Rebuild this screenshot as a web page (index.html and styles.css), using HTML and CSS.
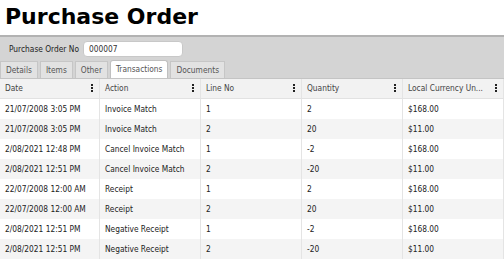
FILE: index.html
```html
<!DOCTYPE html>
<html>
<head>
<meta charset="utf-8">
<link rel="stylesheet" href="styles.css">
</head>
<body>
<h1 class="title">Purchase Order</h1>
<div class="band">
  <div class="field">
    <span class="label">Purchase Order No</span>
    <span class="input">000007</span>
  </div>
  <div class="tabs">
    <span class="tab">Details</span>
    <span class="tab">Items</span>
    <span class="tab">Other</span>
    <span class="tab active">Transactions</span>
    <span class="tab">Documents</span>
  </div>
</div>
<div class="grid">
  <div class="row head">
    <div class="cell">Date<i class="kebab"></i></div>
    <div class="cell">Action<i class="kebab"></i></div>
    <div class="cell">Line No<i class="kebab"></i></div>
    <div class="cell">Quantity<i class="kebab"></i></div>
    <div class="cell">Local Currency Un...<i class="kebab"></i></div>
  </div>
  <div class="row"><div class="cell">21/07/2008 3:05 PM</div><div class="cell">Invoice Match</div><div class="cell">1</div><div class="cell">2</div><div class="cell">$168.00</div></div>
  <div class="row"><div class="cell">21/07/2008 3:05 PM</div><div class="cell">Invoice Match</div><div class="cell">2</div><div class="cell">20</div><div class="cell">$11.00</div></div>
  <div class="row"><div class="cell">2/08/2021 12:48 PM</div><div class="cell">Cancel Invoice Match</div><div class="cell">1</div><div class="cell">-2</div><div class="cell">$168.00</div></div>
  <div class="row"><div class="cell">2/08/2021 12:51 PM</div><div class="cell">Cancel Invoice Match</div><div class="cell">2</div><div class="cell">-20</div><div class="cell">$11.00</div></div>
  <div class="row"><div class="cell">22/07/2008 12:00 AM</div><div class="cell">Receipt</div><div class="cell">1</div><div class="cell">2</div><div class="cell">$168.00</div></div>
  <div class="row"><div class="cell">22/07/2008 12:00 AM</div><div class="cell">Receipt</div><div class="cell">2</div><div class="cell">20</div><div class="cell">$11.00</div></div>
  <div class="row"><div class="cell">2/08/2021 12:51 PM</div><div class="cell">Negative Receipt</div><div class="cell">1</div><div class="cell">-2</div><div class="cell">$168.00</div></div>
  <div class="row"><div class="cell">2/08/2021 12:51 PM</div><div class="cell">Negative Receipt</div><div class="cell">2</div><div class="cell">-20</div><div class="cell">$11.00</div></div>
</div>
</body>
</html>
```

FILE: styles.css
```css
* { box-sizing: border-box; }
html, body { margin: 0; padding: 0; background: #fff; overflow: hidden; }
body {
  width: 504px;
  height: 259px;
  font-family: "DejaVu Sans Condensed", "DejaVu Sans", sans-serif;
  font-stretch: condensed;
  font-size: 8.3px;
  color: #222;
}
.title {
  margin: 0;
  height: 35px;
  padding: 4px 0 0 5px;
  font-family: "DejaVu Sans", sans-serif;
  font-stretch: normal;
  font-weight: bold;
  font-size: 22px;
  line-height: 26px;
  color: #000;
}
.band {
  background: #d4d4d4;
  border-top: 2px solid #b2b2b2;
  height: 44px;
  display: flex;
  flex-direction: column;
  border-bottom: 1px solid #c4c4c4;
}
.field {
  display: flex;
  align-items: center;
  height: 21px;
  padding: 2px 0 0 9px;
}
.label { color: #222; margin-right: 4px; }
.input {
  width: 100px;
  height: 16px;
  background: #fff;
  border: 1px solid #c8c8c8;
  border-radius: 4px;
  padding: 0 5px;
  line-height: 14px;
  color: #333;
}
.tabs {
  display: flex;
  gap: 2px;
  margin-top: auto;
  height: 18px;
  align-items: flex-end;
}
.tab {
  height: 17px;
  padding: 0 5px;
  background: #e2e2e2;
  border: 1px solid #c6c6c6;
  border-bottom: none;
  line-height: 16px;
  color: #555;
}
.tab.active {
  background: #fff;
  height: 18px;
  line-height: 17px;
  border-radius: 3px 3px 0 0;
  border-color: #c0c0c0;
}
.grid { display: flex; flex-direction: column; }
.row {
  display: grid;
  grid-template-columns: 100px 101px 101px 101px 101px;
  height: 20px;
}
.row:nth-child(odd) { background: #f4f4f4; }
.row.head { background: #f2f2f2; border-bottom: 1px solid #e2e2e2; }
.cell {
  position: relative;
  padding: 0 5px;
  line-height: 20px;
  white-space: nowrap;
  border-right: 1px solid #e4e4e4;
  overflow: hidden;
}
.head .cell { color: #444; line-height: 19px; }
.kebab {
  position: absolute;
  right: 6px;
  top: 5px;
  width: 2px;
  height: 2px;
  background: #222;
  box-shadow: 0 3px 0 #222, 0 6px 0 #222;
}
```
